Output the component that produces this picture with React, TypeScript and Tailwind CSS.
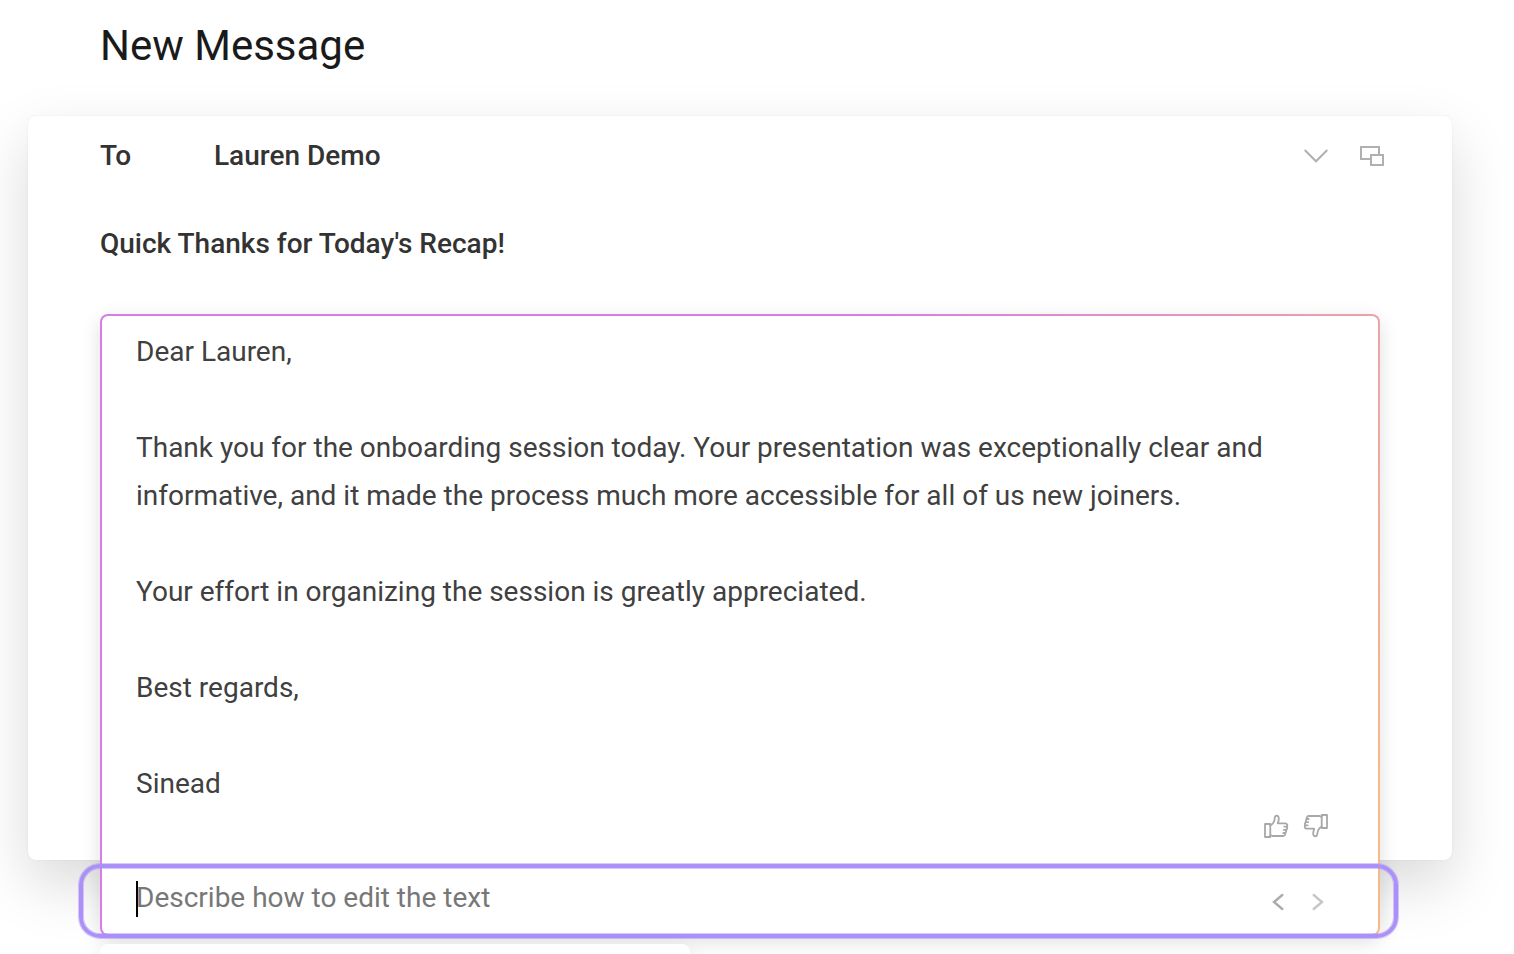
import React from 'react'
import { cva } from 'class-variance-authority'

const BODY = [
    'Dear Lauren,',
    'Thank you for the onboarding session today. Your presentation was exceptionally clear and informative, and it made the process much more accessible for all of us new joiners.',
    'Your effort in organizing the session is greatly appreciated.',
    'Best regards,',
    'Sinead',
]

function ChevronDown() {
    return (
        <svg width="24" height="16" viewBox="0 0 24 16" fill="none" stroke="#b0b0b0" strokeWidth="2">
            <path d="M.7 2 L12 13.3 L23.3 2" />
        </svg>
    )
}

function WindowsIcon() {
    return (
        <svg width="24" height="20" viewBox="0 0 24 20" fill="none" stroke="#b0b0b0" strokeWidth="2">
            <path d="M11 13 H1 V1 H19 V9" />
            <rect x="11" y="9" width="12" height="10" />
        </svg>
    )
}

function ThumbIcon() {
    return (
        <svg width="26" height="26" viewBox="0 0 26 26" fill="none" stroke="#a8a8a8" strokeWidth="1.8" strokeLinejoin="round" strokeLinecap="round">
            <rect x="2" y="11" width="5.3" height="13" />
            <path d="M7.300 12.600 C9.700 11 11.500 8.500 11.700 5.500 C11.800 3.200 12.300 2.600 13.500 2.600 C15.200 2.600 15.800 4 15.800 5.500 C15.800 7.500 15.200 9 14.800 10.400 H22.300 C24.200 10.400 24.700 12 24 13.500 C24.300 14.500 24 16 23.300 16.800 C23.400 18 23 19 22.400 19.800 C22.500 22 21.500 23 20 23 H9.500 L7.300 22.200" />
            <path d="M21.300 13.700 H24 M20.800 16.900 H23.300 M20.300 20 H22.400" />
        </svg>
    )
}

function ArrowIcon() {
    return (
        <svg width="12" height="18" viewBox="0 0 12 18" fill="none" stroke="currentColor" strokeWidth="2.4" strokeLinecap="round">
            <path d="M10.300 2 L2 9 L10.300 16" />
        </svg>
    )
}

const historyButton = cva('block', {
    variants: {
        direction: {
            previous: 'text-[#acacac]',
            next: 'rotate-180 text-[#c6c6c6]',
        },
    },
})

function PromptRow() {
    return (
        <div className="relative flex h-[70px] items-center pr-[54px] pl-[34px]">
            <span className="-mr-0.5 h-9 w-0.5 bg-black" />
            <input
                type="text"
                aria-label="Describe how to edit the text"
                placeholder="Describe how to edit the text"
                className="h-12 min-w-0 flex-1 bg-transparent pb-1 outline-none placeholder:text-[#777]"
            />
            <div className="mt-1.5 flex gap-7">
                <button type="button" aria-label="Previous version" className={historyButton({ direction: 'previous' })}><ArrowIcon /></button>
                <button type="button" aria-label="Next version" className={historyButton({ direction: 'next' })}><ArrowIcon /></button>
            </div>
            {/* highlight ring, wider than the suggestion box */}
            <span className="pointer-events-none absolute top-0 -right-5 -bottom-1 -left-[23px] rounded-[21px] border-4 border-[#ab91f7] shadow-[0_0_0_1px_#ab91f780,inset_0_0_0_1px_#ab91f780]" />
        </div>
    )
}

function Suggestion() {
    return (
        <div className="relative mt-[46px] -mb-[76px] rounded-lg border-2 border-transparent [background:linear-gradient(white,white)_padding-box,linear-gradient(110deg,#d47ee6_50%,#eaa3a8_85%,#f6b98a_96%)_border-box] shadow-[0_6px_20px_rgba(0,0,0,0.13)]">
            <div className="flex flex-col gap-12 px-[34px] pt-3 leading-12">
                {BODY.map((text) => <p key={text}>{text}</p>)}
            </div>
            <div className="flex h-14 items-start justify-end gap-[14px] pt-[5px] pr-[49px]">
                <button type="button" aria-label="Good suggestion"><ThumbIcon /></button>
                <button type="button" aria-label="Bad suggestion" className="rotate-180"><ThumbIcon /></button>
            </div>
            <PromptRow />
        </div>
    )
}

export default function App() {
    return (
        <main className="h-screen overflow-hidden bg-white pr-[62px] pl-7 font-['Roboto',sans-serif] text-[28px] text-[#404040]">
            <h1 className="px-[72px] pt-[14px] pb-[38px] text-[42px] leading-[64px] text-[#1a1a1a]">New Message</h1>

            {/* the suggestion box hangs out of the bottom of the card */}
            <section className="flex flex-col rounded-lg bg-white px-[72px] pt-4 shadow-[0_0_2px_rgba(0,0,0,0.08),0_24px_60px_rgba(0,0,0,0.15)]">
                <div className="flex h-12 items-center font-medium text-[#333]">
                    <span className="w-[114px]">To</span>
                    <span className="flex-1">Lauren Demo</span>
                    <div className="-mr-1 flex items-center gap-8">
                        <button type="button" aria-label="Show more fields"><ChevronDown /></button>
                        <button type="button" aria-label="Pop out"><WindowsIcon /></button>
                    </div>
                </div>
                <h2 className="mt-10 leading-12 font-medium text-[#333]">Quick Thanks for Today's Recap!</h2>
                <Suggestion />
            </section>

            {/* actions menu, opens below the fold */}
            <div className="relative mt-[84px] ml-[72px] h-40 w-[590px] max-w-full rounded-lg bg-white shadow-[0_12px_24px_rgba(0,0,0,0.14)]" />
        </main>
    )
}
